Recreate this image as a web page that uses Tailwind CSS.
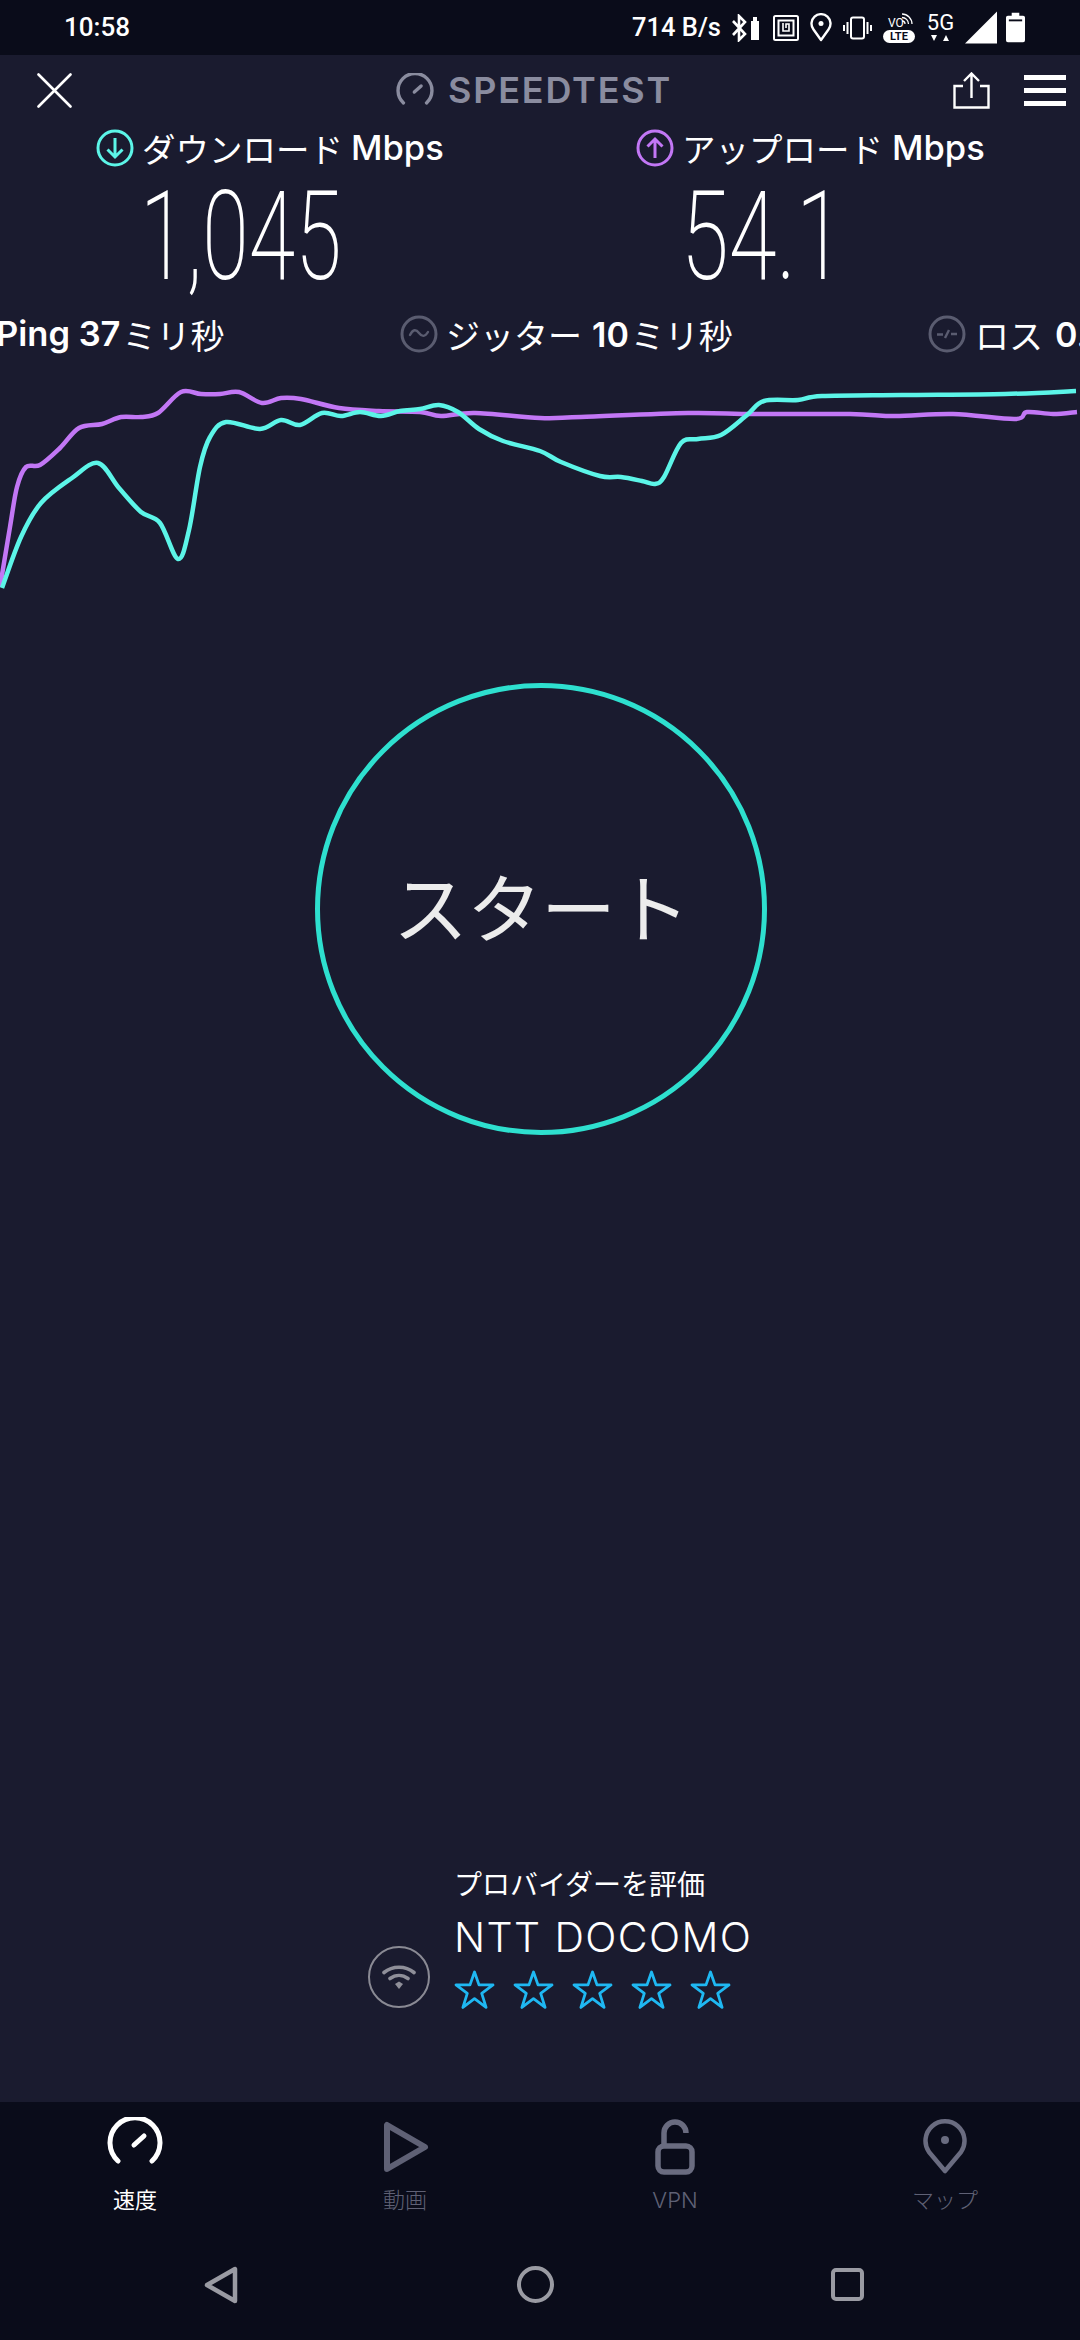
<!DOCTYPE html>
<html lang="ja">
<head>
  <meta charset="utf-8">
  <title>Speedtest</title>
  <script src="https://cdn.jsdelivr.net/npm/@tailwindcss/browser@4"></script>
</head>
<body class="bg-[#1a1b2f] font-['Inter','Noto_Sans_CJK_JP',sans-serif] text-white">
<div class="w-[1080px] h-[2340px] flex flex-col overflow-hidden">

  <!-- status bar -->
  <div class="h-[55px] shrink-0 bg-[#0a0c1a] flex items-center pl-[64px] font-['Roboto',sans-serif] font-medium text-[26px]">
    <span>10:58</span>
    <span class="ml-[502px] w-[92px] text-[25.500px] whitespace-nowrap">714 B/s</span>
    <!-- bluetooth + battery -->
    <svg class="ml-[8px] w-[28px] h-[28px]" viewBox="0 0 28 28" fill="none" stroke="#fff" stroke-width="2.600"><path d="M1 7l12 13-6 6V2l6 6L1 21"/><path d="M19 7h8v19h-8z" fill="#fff" stroke="none"/><path d="M21 3h4v4h-4z" fill="#fff" stroke="none"/></svg>
    <!-- nfc -->
    <svg class="ml-[13px] w-[26px] h-[26px]" viewBox="0 0 26 26" fill="none" stroke="#fff" stroke-width="2"><rect x="1" y="1" width="24" height="24" rx="1.5"/><rect x="5.5" y="5.5" width="15" height="15"/><path d="M10 8v8h6V9h-3v4" stroke-width="1.6"/></svg>
    <!-- location -->
    <svg class="ml-[11px] w-[22px] h-[29px]" viewBox="0 0 22 29" fill="none" stroke="#fff" stroke-width="2.4"><path d="M11 27L3.5 16.5A9.5 9.5 0 1 1 18.500 16.500Z" stroke-linejoin="round"/><circle cx="11" cy="10.500" r="2.500" fill="#fff" stroke="none"/></svg>
    <!-- vibrate -->
    <svg class="ml-[11px] w-[29px] h-[24px]" viewBox="0 0 29 24" fill="none" stroke="#fff" stroke-width="2"><rect x="8" y="1.500" width="13" height="21" rx="2"/><path d="M4.500 6v12M1 9v6M24.500 6v12M28 9v6"/></svg>
    <!-- volte -->
    <div class="ml-[11px] w-[32px] h-[31px] relative">
      <span class="absolute left-[5px] top-[5px] text-[12px] leading-none font-normal">VO</span>
      <svg class="absolute right-0 top-0 w-[16px] h-[14px]" viewBox="0 0 16 14" fill="none" stroke="#fff" stroke-width="1.300"><path d="M3 2a10 10 0 0 1 10 10M3 5.500a6.500 6.500 0 0 1 6.500 6.500M3 9a3 3 0 0 1 3 3"/></svg>
      <span class="absolute left-0 bottom-0 w-[32px] h-[13px] rounded-full bg-white text-[#0a0c1a] text-[11px] leading-[13px] text-center font-bold">LTE</span>
    </div>
    <!-- 5G -->
    <div class="ml-[12px] w-[27px] flex flex-col items-center">
      <span class="text-[22px] leading-[20px] font-normal">5G</span>
      <svg class="w-[18px] h-[7px] mt-[2px]" viewBox="0 0 18 7" fill="#fff"><path d="M0 0h6L3 6zM12 6h6L15 0z"/></svg>
    </div>
    <!-- signal -->
    <svg class="ml-[11px] w-[32px] h-[33px]" viewBox="0 0 33 33" fill="#fff"><path d="M33 0v33H0z"/></svg>
    <!-- battery -->
    <svg class="ml-[9px] w-[19px] h-[31px]" viewBox="0 0 20 31" fill="#fff"><path d="M6 0h8v3h4a2 2 0 0 1 2 2v24a2 2 0 0 1-2 2H2a2 2 0 0 1-2-2V5a2 2 0 0 1 2-2h4z"/><path d="M3 7h14v2H3z" fill="#0a0c1a"/></svg>
  </div>

  <!-- header -->
  <div class="h-[70px] shrink-0 flex items-center pl-[37px]">
    <svg class="w-[35px] h-[35px] shrink-0" viewBox="0 0 35 35" stroke="#fff" stroke-width="2.600" stroke-linecap="round"><path d="M1.500 1.500l32 32M33.500 1.500l-32 32"/></svg>
    <svg class="ml-[324px] w-[38px] h-[34px] shrink-0" viewBox="0 0 56 50" fill="none" stroke="#8a8c9f" stroke-width="5" stroke-linecap="round"><path d="M11 44A25 25 0 1 1 45 44"/><path d="M27 28L37 19"/></svg>
    <span class="ml-[14px] w-[222px] text-[#8a8c9f] text-[36px] font-semibold tracking-[1.800px] whitespace-nowrap">SPEEDTEST</span>
    <svg class="ml-[283px] w-[37px] h-[37px] shrink-0" viewBox="0 0 37 37" fill="none" stroke="#fff" stroke-width="2.400"><path d="M10 14H1.500v21.500h34V14H27"/><path d="M18.500 26V2M11 9l7.500-7.500L26 9"/></svg>
    <div class="ml-[34px] w-[42px] flex flex-col gap-[8px] shrink-0">
      <div class="h-[5px] bg-white"></div><div class="h-[5px] bg-white"></div><div class="h-[5px] bg-white"></div>
    </div>
  </div>

  <!-- download / upload -->
  <div class="h-[177px] shrink-0 flex">
    <div class="w-[540px] pl-[96px] shrink-0">
      <div class="h-[46px] flex items-center whitespace-nowrap">
        <svg class="w-[38px] h-[38px] shrink-0" viewBox="0 0 38 38" fill="none" stroke="#5cf5e8" stroke-width="3"><circle cx="19" cy="19" r="17"/><path d="M19 9v19M11.500 20.500L19 28l7.500-7.500"/></svg>
        <span class="ml-[8px] text-[33.500px] font-['Noto_Sans_CJK_JP',sans-serif] font-normal">ダウンロード</span>
        <span class="ml-[8px] text-[34.500px] font-medium">Mbps</span>
      </div>
      <div class="h-[131px] pl-[44px] flex items-center">
        <span class="origin-left scale-x-[.68] font-['Roboto',sans-serif] font-extralight text-[124px] leading-none">1,045</span>
      </div>
    </div>
    <div class="w-[540px] pl-[96px] shrink-0">
      <div class="h-[46px] flex items-center whitespace-nowrap">
        <svg class="w-[38px] h-[38px] shrink-0" viewBox="0 0 38 38" fill="none" stroke="#c277f5" stroke-width="3"><circle cx="19" cy="19" r="17"/><path d="M19 29V10M11.500 17.500L19 10l7.500 7.500"/></svg>
        <span class="ml-[8px] text-[33.500px] font-['Noto_Sans_CJK_JP',sans-serif] font-normal">アップロード</span>
        <span class="ml-[9px] text-[34.500px] font-medium">Mbps</span>
      </div>
      <div class="h-[131px] pl-[45px] flex items-center">
        <span class="origin-left scale-x-[.7] font-['Roboto',sans-serif] font-extralight text-[124px] leading-none">54.1</span>
      </div>
    </div>
  </div>

  <!-- ping / jitter / loss -->
  <div class="h-[48px] mt-[8px] shrink-0 flex items-center whitespace-nowrap text-[34px]">
    <div class="w-[402px] shrink-0 flex items-center -ml-[4px]">
      <span class="font-semibold text-[34.500px]">Ping 37</span><span class="ml-[2px] font-['Noto_Sans_CJK_JP',sans-serif] font-normal">ミリ秒</span>
    </div>
    <div class="w-[530px] shrink-0 pl-[2px] flex items-center">
      <svg class="w-[38px] h-[38px] shrink-0" viewBox="0 0 38 38" fill="none" stroke="#5a5c70" stroke-width="3"><circle cx="19" cy="19" r="17"/><path d="M10 20c3-6 6-6 9-2s6 4 9-1" stroke-width="2.400" stroke-linecap="round"/></svg>
      <span class="ml-[8px] font-['Noto_Sans_CJK_JP',sans-serif] font-normal">ジッター</span>
      <span class="ml-[10px] font-semibold">10</span><span class="ml-[2px] font-['Noto_Sans_CJK_JP',sans-serif] font-normal">ミリ秒</span>
    </div>
    <svg class="w-[38px] h-[38px] shrink-0" viewBox="0 0 38 38" fill="none" stroke="#5a5c70" stroke-width="3"><circle cx="19" cy="19" r="17"/><path d="M9 19.500h6M17 23l4-8M23 19h6" stroke-width="2.400"/></svg>
    <span class="ml-[9px] font-['Noto_Sans_CJK_JP',sans-serif] font-normal">ロス</span>
    <span class="ml-[12px] font-semibold">0.0</span>
  </div>

  <!-- chart -->
  <svg id="chart" class="block mt-[22px] w-[1080px] h-[220px] shrink-0" viewBox="0 380 1080 220" fill="none" stroke-width="4.500" stroke-linejoin="round">
    <path id="purple" stroke="#c277f5"></path>
    <path id="cyan" stroke="#5cf5e8"></path>
  </svg>

  <!-- start button -->
  <div class="mt-[83px] ml-[315px] w-[452px] h-[452px] shrink-0 rounded-full border-[5px] border-[#2ee0cf] flex items-center justify-center">
    <span class="text-[75px] leading-none tracking-[-1px] text-[#ececec] font-['Noto_Sans_CJK_JP',sans-serif] font-normal pb-[10px]">スタート</span>
  </div>

  <!-- rate provider -->
  <div class="mt-auto mb-[92px] pl-[368px] flex items-end">
    <div class="w-[62px] h-[62px] mb-[2px] rounded-full border-2 border-[#8a8a94] flex items-center justify-center shrink-0">
      <svg class="w-[34px] h-[26px]" viewBox="0 0 34 26" fill="none" stroke="#8f8f99" stroke-width="3.600" stroke-linecap="round"><path d="M2 8.500c8.500-7 21.500-7 30 0M8 14.500c5.500-4 12.500-4 18 0"/><path d="M13 20l4-2.500 4 2.500-4 5z" fill="#8f8f99" stroke="none"/></svg>
    </div>
    <div class="ml-[24px] flex flex-col">
      <span class="text-[28px] leading-[36px] font-['Noto_Sans_CJK_JP',sans-serif] font-normal whitespace-nowrap">プロバイダーを評価</span>
      <span class="mt-[14px] text-[41px] leading-[44px] font-light tracking-[1.400px] whitespace-nowrap">NTT DOCOMO</span>
      <div class="mt-[11px] flex gap-[18px]">
        <svg class="w-[41px] h-[40px]" viewBox="0 0 41 40" fill="none" stroke="#1fb8f2" stroke-width="2.800" stroke-linejoin="round"><path id="star" d="M20.500 2L25 14.900h14L27.700 23.400l4.400 14-11.600-8.800-11.600 8.800 4.400-14L2 14.900h14z"/></svg>
        <svg class="w-[41px] h-[40px]" viewBox="0 0 41 40" fill="none" stroke="#1fb8f2" stroke-width="2.800" stroke-linejoin="round"><use href="#star"/></svg>
        <svg class="w-[41px] h-[40px]" viewBox="0 0 41 40" fill="none" stroke="#1fb8f2" stroke-width="2.800" stroke-linejoin="round"><use href="#star"/></svg>
        <svg class="w-[41px] h-[40px]" viewBox="0 0 41 40" fill="none" stroke="#1fb8f2" stroke-width="2.800" stroke-linejoin="round"><use href="#star"/></svg>
        <svg class="w-[41px] h-[40px]" viewBox="0 0 41 40" fill="none" stroke="#1fb8f2" stroke-width="2.800" stroke-linejoin="round"><use href="#star"/></svg>
      </div>
    </div>
  </div>

  <!-- tab bar -->
  <div class="h-[238px] shrink-0 bg-[#0a0c1a]">
    <div class="h-[134px] grid grid-cols-[270px_270px_270px_270px] text-[22px] text-[#5f6175]">
      <div class="flex flex-col items-center text-white">
        <div class="h-[79px] flex items-start pt-[15px]">
          <svg class="w-[56px] h-[50px]" viewBox="0 0 56 50" fill="none" stroke="#fff" stroke-width="5" stroke-linecap="round"><path d="M11 44A25 25 0 1 1 45 44"/><path d="M27 28L37 19"/></svg>
        </div>
        <span class="leading-[34px] font-['Noto_Sans_CJK_JP',sans-serif]">速度</span>
      </div>
      <div class="flex flex-col items-center">
        <div class="h-[79px] flex items-start pt-[19px]">
          <svg class="w-[46px] h-[52px] ml-[2px]" viewBox="0 0 46 52" fill="none" stroke="#5f6175" stroke-width="6" stroke-linejoin="round"><path d="M4 4v44l38-22z"/></svg>
        </div>
        <span class="leading-[34px] font-['Noto_Sans_CJK_JP',sans-serif] font-light">動画</span>
      </div>
      <div class="flex flex-col items-center">
        <div class="h-[79px] flex items-start pt-[17px]">
          <svg class="w-[40px] h-[56px]" viewBox="0 0 40 56" fill="none" stroke="#6a6c80" stroke-width="5.500"><rect x="3" y="27" width="34" height="26" rx="6"/><path d="M9 27V14a11 11 0 0 1 22 0"/></svg>
        </div>
        <span class="mt-[2px] leading-[34px] font-light">VPN</span>
      </div>
      <div class="flex flex-col items-center">
        <div class="h-[79px] flex items-start pt-[17px]">
          <svg class="w-[44px] h-[56px]" viewBox="0 0 44 56" fill="none" stroke="#6a6c80" stroke-width="4.500"><path d="M22 52L6 33A19.500 19.500 0 1 1 38 33Z" stroke-linejoin="round"/><circle cx="22" cy="21" r="4" fill="#6a6c80" stroke="none"/></svg>
        </div>
        <span class="leading-[34px] font-['Noto_Sans_CJK_JP',sans-serif] font-light">マップ</span>
      </div>
    </div>
    <!-- android nav -->
    <div class="h-[104px] flex items-start pt-[30px] pl-[204px]">
      <svg class="w-[34px] h-[38px]" viewBox="0 0 34 38" fill="none" stroke="#9a9ba3" stroke-width="4.500" stroke-linejoin="round"><path d="M31 3v32L3 19z"/></svg>
      <div class="ml-[279px] w-[37px] h-[37px] rounded-full border-[4.500px] border-[#9a9ba3]"></div>
      <div class="ml-[277px] w-[33px] h-[33px] mt-[2px] rounded-[5px] border-[4.500px] border-[#9a9ba3]"></div>
    </div>
  </div>
</div>

<script>
  const purple = [[0,587],[10,527],[17,487],[26,467],[40,465],[60,448],[79,428],[102,424],[121,417],[141,417],[158,413],[181,392],[201,394],[220,394],[239,392],[262,403],[281,398],[301,399],[339,408],[379,411],[420,412],[441,416],[475,413],[540,418],[581,417],[688,413],[754,414],[850,414],[895,416],[953,414],[1015,419],[1027,412],[1053,414],[1077,412]];
  const cyan = [[2,588],[21,537],[41,503],[72,478],[98,463],[119,488],[141,512],[160,523],[178,559],[189,530],[200,467],[210,437],[226,422],[260,429],[281,420],[300,425],[322,413],[341,416],[360,412],[381,416],[400,411],[420,409],[439,405],[458,412],[479,429],[503,441],[540,451],[561,462],[600,476],[621,477],[642,481],[655,484],[664,477],[681,443],[698,439],[721,435],[747,415],[764,401],[798,400],[822,396],[902,395],[1005,394],[1076,391]];

  // catmull-rom through the sampled points
  function smooth(pts) {
    let d = `M${pts[0][0]} ${pts[0][1]}`;
    for (let i = 0; i < pts.length - 1; i++) {
      const p0 = pts[i - 1] || pts[i], p1 = pts[i], p2 = pts[i + 1], p3 = pts[i + 2] || p2;
      const c1x = p1[0] + (p2[0] - p0[0]) / 6, c1y = p1[1] + (p2[1] - p0[1]) / 6;
      const c2x = p2[0] - (p3[0] - p1[0]) / 6, c2y = p2[1] - (p3[1] - p1[1]) / 6;
      d += `C${c1x} ${c1y} ${c2x} ${c2y} ${p2[0]} ${p2[1]}`;
    }
    return d;
  }
  document.getElementById('purple').setAttribute('d', smooth(purple));
  document.getElementById('cyan').setAttribute('d', smooth(cyan));
</script>
</body>
</html>
